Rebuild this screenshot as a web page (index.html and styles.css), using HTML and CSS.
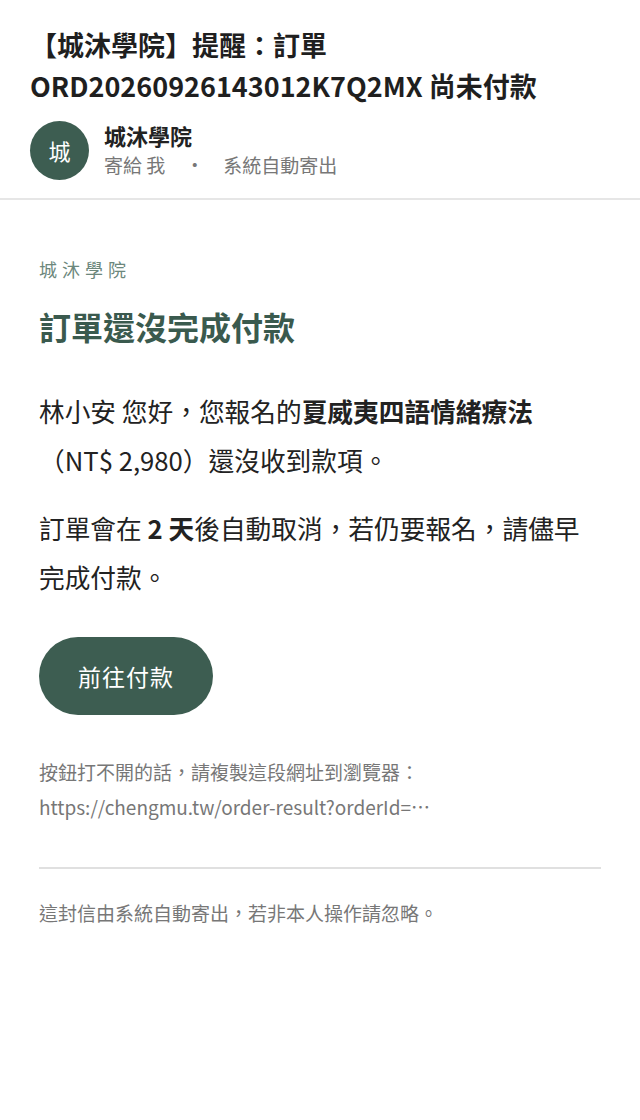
FILE: index.html
```html
<!DOCTYPE html>
<html lang="zh-Hant">
<head>
<meta charset="utf-8">
<title>訂單尚未付款</title>
<link rel="stylesheet" href="styles.css">
</head>
<body>
<header class="mail-head">
  <h1 class="subject">【城沐學院】提醒：訂單 ORD20260926143012K7Q2MX 尚未付款</h1>
  <div class="sender">
    <div class="avatar">城</div>
    <div class="sender-info">
      <div class="sender-name">城沐學院</div>
      <div class="sender-meta"><span>寄給 我</span><span class="dot">·</span><span>系統自動寄出</span></div>
    </div>
  </div>
</header>
<main class="mail-body">
  <div class="brand">城沐學院</div>
  <h2 class="headline">訂單還沒完成付款</h2>
  <p class="text">林小安 您好，您報名的<strong>夏威夷四語情緒療法</strong>（NT$ 2,980）還沒收到款項。</p>
  <p class="text">訂單會在 <strong>2 天</strong>後自動取消，若仍要報名，請儘早完成付款。</p>
  <a class="pay-btn" href="#">前往付款</a>
  <p class="fallback">按鈕打不開的話，請複製這段網址到瀏覽器：<br>https://chengmu.tw/order-result?orderId=…</p>
  <hr class="rule">
  <p class="footnote">這封信由系統自動寄出，若非本人操作請忽略。</p>
</main>
</body>
</html>
```
FILE: styles.css
```css
html, body {
  margin: 0;
  padding: 0;
  background: #fff;
}
body {
  font-family: "Noto Sans CJK TC", "Noto Sans", sans-serif;
  color: #222;
}
.mail-head {
  padding: 24px 30px 18px;
  border-bottom: 2px solid #e6e6e6;
}
.subject {
  margin: 0;
  font-size: 27px;
  line-height: 41px;
  font-weight: 700;
  color: #1f1f1f;
}
.sender {
  display: flex;
  align-items: center;
  gap: 15px;
  margin-top: 14px;
}
.avatar {
  width: 59px;
  height: 59px;
  border-radius: 50%;
  background: #3d5d51;
  color: #fff;
  font-size: 22px;
  display: flex;
  align-items: center;
  justify-content: center;
  flex: none;
}
.sender-name {
  font-size: 22px;
  font-weight: 700;
  line-height: 30px;
  color: #222;
}
.sender-meta {
  font-size: 19px;
  line-height: 30px;
  color: #777;
  display: flex;
}
.sender-meta .dot {
  padding: 0 19px 0 20px;
}
.mail-body {
  padding: 55px 39px 40px;
}
.brand {
  font-size: 18px;
  letter-spacing: 5px;
  color: #6c877c;
  line-height: 28px;
}
.headline {
  margin: 21px 0 0;
  font-size: 32px;
  line-height: 44px;
  font-weight: 700;
  color: #3a5a4e;
}
.text {
  margin: 38px 0 0;
  font-size: 25.7px;
  line-height: 49px;
  color: #222;
}
.text + .text {
  margin-top: 19px;
}
.text strong {
  font-weight: 700;
}
.pay-btn {
  display: inline-block;
  margin-top: 36px;
  padding: 0 39px;
  height: 78px;
  line-height: 78px;
  border-radius: 39px;
  background: #3d5d51;
  color: #fff;
  font-size: 23px;
  letter-spacing: 1px;
  text-decoration: none;
}
.fallback {
  margin: 39px 0 0;
  font-size: 19px;
  line-height: 35px;
  color: #777;
}
.rule {
  margin: 43px 0 0;
  border: none;
  border-top: 2px solid #e0e0e0;
}
.footnote {
  margin: 26px 0 0;
  font-size: 19px;
  line-height: 35px;
  color: #777;
}
```
